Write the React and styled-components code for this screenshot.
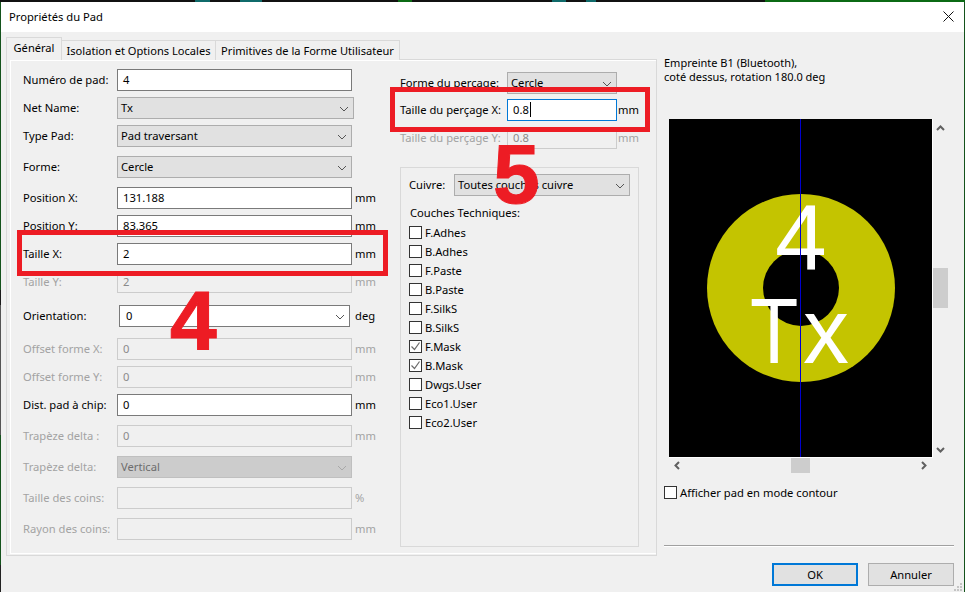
import React from 'react';
import styled, { createGlobalStyle } from 'styled-components';

const GlobalStyle = createGlobalStyle`
  html, body {
    margin: 0;
    padding: 0;
    background: #14531c;
  }
  body {
    font-family: "Noto Sans", "Open Sans", sans-serif;
    font-size: 11.2px;
    color: #000;
  }
`;

const Page = styled.div`
  position: relative;
  width: 965px;
  height: 592px;
  box-sizing: border-box;
  padding: 2px 1px 0 1px;
  overflow: hidden;
  background:
    linear-gradient(90deg,
      #111 0 195px, #0f6a6a 195px 210px, #111 210px 240px, #0f6a6a 240px 262px, #111 262px 398px,
      #0b6a14 398px 412px, #111 412px 552px, #0f6a6a 552px 566px, #111 566px 586px, #0f6a6a 586px 596px,
      #111 596px 765px, #0b6a14 765px 965px) top / 100% 2px no-repeat,
    linear-gradient(180deg,
      #14531c 0 290px, #1a1a1a 290px 305px, #555 305px 435px, #14531c 435px 565px, #222 565px 592px) left / 1px 100% no-repeat,
    #14531c;
`;

const Window = styled.div`
  display: flex;
  flex-direction: column;
  height: 590px;
  background: #f0f0f0;
`;

const TitleBar = styled.div`
  box-sizing: border-box;
  display: flex;
  align-items: center;
  justify-content: space-between;
  flex: none;
  height: 30px;
  padding: 0 10px 2px 8px;
  background: #fff;
`;

const Body = styled.div`
  position: relative;
  display: flex;
  flex: 1;
  padding: 5px 0 0 5px;
`;

const Notebook = styled.div`
  flex: none;
  width: 651px;
`;

const TabRow = styled.div`
  display: flex;
  align-items: flex-end;
  height: 23px;
  font-size: 11.1px;
`;

const Tab = styled.div`
  box-sizing: border-box;
  display: flex;
  align-items: center;
  justify-content: center;
  height: ${(p) => (p.$active ? '23px' : '20px')};
  width: ${(p) => p.$width}px;
  border: 1px solid #d9d9d9;
  border-bottom: none;
  border-left: ${(p) => (p.$active ? '1px solid #d9d9d9' : 'none')};
  background: #f0f0f0;
  position: relative;
  z-index: ${(p) => (p.$active ? 1 : 0)};
  padding-bottom: ${(p) => (p.$active ? '4px' : '0')};
`;

const Panel = styled.div`
  box-sizing: border-box;
  height: 497px;
  margin-top: -1px;
  border: 1px solid #d9d9d9;
  padding: 0 0 1px 3px;
`;

const PanelInner = styled.div`
  box-sizing: border-box;
  display: flex;
  height: 100%;
  border-left: 1px solid #fff;
  border-top: 1px solid #fff;
  border-bottom: 1px solid #fff;
`;

const FormColumn = styled.div`
  flex: none;
  width: 389px;
  box-sizing: border-box;
  padding: 8px 0 0 12px;
`;

const SideColumn = styled.div`
  flex: none;
  width: 239px;
  padding-top: 11px;
`;

const Row = styled.div`
  display: flex;
  align-items: center;
  height: 22px;
  margin-top: ${(p) => p.$top || 0}px;
`;

const Label = styled.div`
  flex: none;
  width: ${(p) => p.$width || 94}px;
  padding-bottom: 2px;
  white-space: nowrap;
  color: ${(p) => (p.$disabled ? '#a3a3a3' : '#000')};
`;

const Unit = styled.div`
  margin-left: ${(p) => (p.$gap === undefined ? 3 : p.$gap)}px;
  padding-bottom: 2px;
  color: ${(p) => (p.$disabled ? '#a3a3a3' : '#000')};
`;

const Input = styled.div`
  box-sizing: border-box;
  display: flex;
  align-items: center;
  flex: none;
  width: ${(p) => p.$width || 235}px;
  height: 100%;
  padding: 0 0 2px 5px;
  background: ${(p) => (p.$disabled ? '#f0f0f0' : '#fff')};
  border: 1px solid ${(p) => (p.$focus ? '#0078d7' : p.$disabled ? '#cccccc' : '#7a7a7a')};
  color: ${(p) => (p.$disabled ? '#8a8a8a' : '#000')};
`;

const Caret = styled.span`
  display: inline-block;
  width: 1px;
  height: 15px;
  margin-left: 1px;
  background: #000;
`;

const ComboBox = styled.div`
  box-sizing: border-box;
  display: flex;
  align-items: center;
  justify-content: space-between;
  flex: none;
  width: ${(p) => p.$width || 235}px;
  height: 100%;
  padding: 0 4px 2px 3px;
  background: ${(p) => (p.$disabled ? '#cccccc' : p.$white ? '#fff' : '#e1e1e1')};
  border: 1px solid ${(p) => (p.$disabled ? '#bfbfbf' : p.$white ? '#7a7a7a' : '#adadad')};
  color: ${(p) => (p.$disabled ? '#6d6d6d' : '#000')};
  margin-left: ${(p) => p.$left || 0}px;
`;

const ChevronIcon = styled.svg`
  margin-top: 4px;
`;

const GroupBox = styled.div`
  box-sizing: border-box;
  height: 380px;
  margin-top: 18px;
  padding: 6px 0 0 8px;
  border: 1px solid #d9d9d9;
`;

const GroupTitle = styled.div`
  margin: 10px 0 3px 1px;
  line-height: 14px;
`;

const CheckList = styled.div`
  display: flex;
  flex-direction: column;
`;

const CheckRow = styled.div`
  display: flex;
  align-items: center;
  gap: 3px;
  height: 19px;
`;

const Box = styled.div`
  box-sizing: border-box;
  display: flex;
  align-items: center;
  justify-content: center;
  width: 13px;
  height: 13px;
  background: #fff;
  border: 1px solid #333;
`;

const SidePane = styled.div`
  display: flex;
  flex-direction: column;
  flex: none;
  width: 290px;
  margin-left: 7px;
`;

const Caption = styled.div`
  margin-top: 19px;
  line-height: 14px;
  font-size: 11px;
`;

const PreviewGrid = styled.div`
  display: grid;
  grid-template-columns: 264px 17px;
  grid-template-rows: 339px 16px;
  margin: 35px 0 0 5px;
`;

const Canvas = styled.div`
  background: #000;
  border-right: 1px solid #fff;
  border-bottom: 1px solid #fff;
  line-height: 0;
`;

const VScroll = styled.div`
  display: flex;
  flex-direction: column;
  padding: 6px 0 5px 0;
`;

const VArrow = styled.div`
  display: flex;
  justify-content: center;
  width: 15px;
  margin-top: ${(p) => (p.$end ? 'auto' : 0)};
`;

const VThumb = styled.div`
  width: 15px;
  height: 40px;
  margin-top: 137px;
  background: #cdcdcd;
`;

const HScroll = styled.div`
  display: flex;
  align-items: center;
  height: 15px;
  padding: 0 0 1px 5px;
`;

const HThumb = styled.div`
  width: 19px;
  height: 15px;
  margin: 0 111px;
  background: #cdcdcd;
`;

const ContourRow = styled(CheckRow)`
  margin-top: 11px;
  height: 14px;
`;

const Separator = styled.div`
  height: 1px;
  margin-top: 46px;
  background: #a0a0a0;
  box-shadow: 0 1px 0 #fff;
`;

const Footer = styled.div`
  display: flex;
  justify-content: flex-end;
  gap: 10px;
  margin-top: 17px;
`;

const Button = styled.div`
  box-sizing: border-box;
  display: flex;
  align-items: center;
  justify-content: center;
  width: ${(p) => p.$width}px;
  height: 23px;
  background: #e1e1e1;
  border: ${(p) => (p.$primary ? '2px solid #0078d7' : '1px solid #adadad')};
`;

const Grip = styled.svg`
  position: absolute;
  right: 2px;
  bottom: 1px;
`;

const RedBox = styled.div`
  position: absolute;
  box-sizing: border-box;
  left: ${(p) => p.$left}px;
  top: ${(p) => p.$top}px;
  width: ${(p) => p.$width}px;
  height: ${(p) => p.$height}px;
  border: 5px solid #ed1c24;
`;

const BigNumber = styled.div`
  position: absolute;
  left: ${(p) => p.$left}px;
  top: ${(p) => p.$top}px;
  font-family: "Liberation Sans", Arial, sans-serif;
  font-weight: 700;
  font-size: 84px;
  line-height: 84px;
  color: #ed1c24;
  -webkit-text-stroke: 1px #ed1c24;
`;

const Chevron = ({ color = '#555' }) => (
  <ChevronIcon width="10" height="6" viewBox="0 0 10 6">
    <path d="M1 1l4 4 4-4" fill="none" stroke={color} strokeWidth="1" />
  </ChevronIcon>
);

const ScrollArrow = ({ dir }) => {
  const paths = {
    up: 'M1 5l3.5-3.5L8 5',
    down: 'M1 1l3.5 3.5L8 1',
    left: 'M5 1L1.5 4.5 5 8',
    right: 'M1 1l3.5 3.5L1 8',
  };
  const vertical = dir === 'up' || dir === 'down';
  return (
    <svg width={vertical ? 9 : 6} height={vertical ? 6 : 9}>
      <path d={paths[dir]} fill="none" stroke="#606060" strokeWidth="2" />
    </svg>
  );
};

const Check = () => (
  <svg width="11" height="11" viewBox="0 0 11 11">
    <path d="M1.5 5.5l3 3 5-7" fill="none" stroke="#6a6a6a" strokeWidth="1.2" />
  </svg>
);

const layers = [
  ['F.Adhes', false],
  ['B.Adhes', false],
  ['F.Paste', false],
  ['B.Paste', false],
  ['F.SilkS', false],
  ['B.SilkS', false],
  ['F.Mask', true],
  ['B.Mask', true],
  ['Dwgs.User', false],
  ['Eco1.User', false],
  ['Eco2.User', false],
];

const PadPreview = () => (
  <svg width="263" height="338" viewBox="0 0 263 338" fontFamily="Liberation Sans, Arial, sans-serif" fill="#fff">
    <circle cx="132" cy="169" r="94" fill="#c4c400" />
    <circle cx="132" cy="169" r="38" fill="#000" />
    <text x="106" y="150" fontSize="93">4</text>
    <text transform="translate(81 244) scale(0.86 1)" fontSize="92">T</text>
    <text x="134" y="244" fontSize="92">x</text>
    <rect x="131" y="0" width="1" height="338" fill="#0000d0" />
  </svg>
);

export default function App() {
  return (
    <Page>
      <GlobalStyle />
      <Window>
        <TitleBar>
          <span>Propriétés du Pad</span>
          <svg width="11" height="11" viewBox="0 0 11 11">
            <path d="M.5.5l10 10M10.5.5l-10 10" stroke="#111" strokeWidth="1" fill="none" />
          </svg>
        </TitleBar>
        <Body>
          <Notebook>
            <TabRow>
              <Tab $active $width={56}>Général</Tab>
              <Tab $width={154}>Isolation et Options Locales</Tab>
              <Tab $width={184}>Primitives de la Forme Utilisateur</Tab>
            </TabRow>
            <Panel>
              <PanelInner>
                <FormColumn>
                  <Row>
                    <Label>Numéro de pad:</Label>
                    <Input>4</Input>
                  </Row>
                  <Row $top={6}>
                    <Label>Net Name:</Label>
                    <ComboBox $width={237}>Tx<Chevron /></ComboBox>
                  </Row>
                  <Row $top={6}>
                    <Label>Type Pad:</Label>
                    <ComboBox>Pad traversant<Chevron /></ComboBox>
                  </Row>
                  <Row $top={9}>
                    <Label>Forme:</Label>
                    <ComboBox>Cercle<Chevron /></ComboBox>
                  </Row>
                  <Row $top={9}>
                    <Label>Position X:</Label>
                    <Input>131.188</Input>
                    <Unit>mm</Unit>
                  </Row>
                  <Row $top={6}>
                    <Label>Position Y:</Label>
                    <Input>83.365</Input>
                    <Unit>mm</Unit>
                  </Row>
                  <Row $top={6}>
                    <Label>Taille X:</Label>
                    <Input>2</Input>
                    <Unit>mm</Unit>
                  </Row>
                  <Row $top={6}>
                    <Label $disabled>Taille Y:</Label>
                    <Input $disabled>2</Input>
                    <Unit $disabled>mm</Unit>
                  </Row>
                  <Row $top={12}>
                    <Label>Orientation:</Label>
                    <ComboBox $white $width={231} $left={2}>&nbsp;0<Chevron /></ComboBox>
                    <Unit $gap={5}>deg</Unit>
                  </Row>
                  <Row $top={11}>
                    <Label $disabled>Offset forme X:</Label>
                    <Input $disabled>0</Input>
                    <Unit $disabled>mm</Unit>
                  </Row>
                  <Row $top={6}>
                    <Label $disabled>Offset forme Y:</Label>
                    <Input $disabled>0</Input>
                    <Unit $disabled>mm</Unit>
                  </Row>
                  <Row $top={6}>
                    <Label>Dist. pad à chip:</Label>
                    <Input>0</Input>
                    <Unit>mm</Unit>
                  </Row>
                  <Row $top={9}>
                    <Label $disabled>Trapèze delta :</Label>
                    <Input $disabled>0</Input>
                    <Unit $disabled>mm</Unit>
                  </Row>
                  <Row $top={9}>
                    <Label $disabled>Trapèze delta:</Label>
                    <ComboBox $disabled>Vertical<Chevron color="#a8a8a8" /></ComboBox>
                  </Row>
                  <Row $top={9}>
                    <Label $disabled>Taille des coins:</Label>
                    <Input $disabled />
                    <Unit $disabled>%</Unit>
                  </Row>
                  <Row $top={9}>
                    <Label $disabled>Rayon des coins:</Label>
                    <Input $disabled />
                    <Unit $disabled>mm</Unit>
                  </Row>
                </FormColumn>
                <SideColumn>
                  <Row>
                    <Label $width={107}>Forme du perçage:</Label>
                    <ComboBox $width={110}>Cercle<Chevron /></ComboBox>
                  </Row>
                  <Row $top={5}>
                    <Label $width={107}>Taille du perçage X:</Label>
                    <Input $focus $width={110}>0.8<Caret /></Input>
                    <Unit $gap={1}>mm</Unit>
                  </Row>
                  <Row $top={6}>
                    <Label $width={107} $disabled>Taille du perçage Y:</Label>
                    <Input $disabled $width={110}>0.8</Input>
                    <Unit $disabled $gap={1}>mm</Unit>
                  </Row>
                  <GroupBox>
                    <Row>
                      <Label $width={45}>Cuivre:</Label>
                      <ComboBox $width={176}>Toutes couches cuivre<Chevron /></ComboBox>
                    </Row>
                    <GroupTitle>Couches Techniques:</GroupTitle>
                    <CheckList>
                      {layers.map(([name, checked]) => (
                        <CheckRow key={name}>
                          <Box>{checked && <Check />}</Box>
                          {name}
                        </CheckRow>
                      ))}
                    </CheckList>
                  </GroupBox>
                </SideColumn>
              </PanelInner>
            </Panel>
          </Notebook>
          <SidePane>
            <Caption>
              Empreinte B1 (Bluetooth),
              <br />
              coté dessus, rotation 180.0 deg
            </Caption>
            <PreviewGrid>
              <Canvas><PadPreview /></Canvas>
              <VScroll>
                <VArrow><ScrollArrow dir="up" /></VArrow>
                <VThumb />
                <VArrow $end><ScrollArrow dir="down" /></VArrow>
              </VScroll>
              <HScroll>
                <ScrollArrow dir="left" />
                <HThumb />
                <ScrollArrow dir="right" />
              </HScroll>
            </PreviewGrid>
            <ContourRow>
              <Box />
              Afficher pad en mode contour
            </ContourRow>
            <Separator />
            <Footer>
              <Button $primary $width={86}>OK</Button>
              <Button $width={86}>Annuler</Button>
            </Footer>
          </SidePane>
          <Grip width="8" height="8" viewBox="0 0 8 8" fill="#c4c4c4">
            <rect x="6" y="0" width="2" height="2" />
            <rect x="3" y="3" width="2" height="2" />
            <rect x="6" y="3" width="2" height="2" />
            <rect x="0" y="6" width="2" height="2" />
            <rect x="3" y="6" width="2" height="2" />
            <rect x="6" y="6" width="2" height="2" />
          </Grip>
        </Body>
      </Window>
      <RedBox $left={17} $top={230} $width={371} $height={46} />
      <RedBox $left={390} $top={87} $width={260} $height={45} />
      <BigNumber $left={170} $top={279}>4</BigNumber>
      <BigNumber $left={493} $top={132}>5</BigNumber>
    </Page>
  );
}
